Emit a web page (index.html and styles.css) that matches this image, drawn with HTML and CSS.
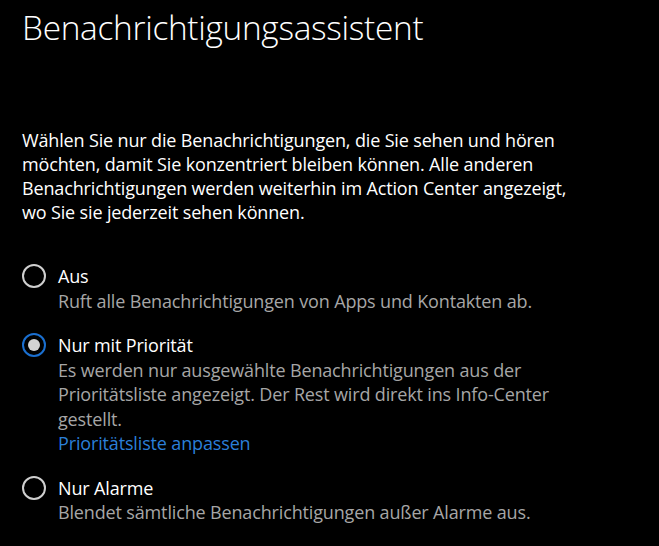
FILE: index.html
```html
<!DOCTYPE html>
<html lang="de">
<head>
<meta charset="utf-8">
<link rel="stylesheet" href="styles.css">
</head>
<body>
<main class="page">
  <h1 class="title">Benachrichtigungsassistent</h1>
  <p class="intro">Wählen Sie nur die Benachrichtigungen, die Sie sehen und hören möchten, damit Sie konzentriert bleiben können. Alle anderen Benachrichtigungen werden weiterhin im Action Center angezeigt, wo Sie sie jederzeit sehen können.</p>
  <div class="options">
    <div class="option">
      <span class="radio"></span>
      <div class="option-body">
        <div class="label">Aus</div>
        <div class="desc">Ruft alle Benachrichtigungen von Apps und Kontakten ab.</div>
      </div>
    </div>
    <div class="option">
      <span class="radio checked"></span>
      <div class="option-body">
        <div class="label">Nur mit Priorität</div>
        <div class="desc">Es werden nur ausgewählte Benachrichtigungen aus der Prioritätsliste angezeigt. Der Rest wird direkt ins Info-Center gestellt.</div>
        <a class="link" href="#">Prioritätsliste anpassen</a>
      </div>
    </div>
    <div class="option">
      <span class="radio"></span>
      <div class="option-body">
        <div class="label">Nur Alarme</div>
        <div class="desc">Blendet sämtliche Benachrichtigungen außer Alarme aus.</div>
      </div>
    </div>
  </div>
</main>
</body>
</html>
```
FILE: styles.css
```css
html, body {
  margin: 0;
  background: #000;
}
body {
  font-family: "Open Sans", "Noto Sans", sans-serif;
  color: #fff;
  width: 659px;
  height: 546px;
  overflow: hidden;
}
.page {
  padding: 0 0 0 22px;
}
.title {
  margin: 0;
  padding-top: 4px;
  font-weight: 300;
  font-size: 33.4px;
  line-height: 46px;
  letter-spacing: -0.3px;
}
.intro {
  margin: 78px 0 0 0;
  width: 568px;
  font-size: 18px;
  line-height: 24px;
  letter-spacing: -0.15px;
}
.options {
  margin-top: 40px;
  display: flex;
  flex-direction: column;
  gap: 20px;
}
.option {
  display: flex;
  gap: 12px;
  align-items: flex-start;
}
.radio {
  flex: none;
  width: 20px;
  height: 20px;
  border: 2.5px solid #cfcfcf;
  border-radius: 50%;
  position: relative;
}
.radio.checked {
  border-color: #1a6fd0;
}
.radio.checked::after {
  content: "";
  position: absolute;
  left: 4px;
  top: 4px;
  width: 12px;
  height: 12px;
  border-radius: 50%;
  background: #d4d4d4;
}
.option-body {
  font-size: 18px;
  line-height: 24.5px;
  letter-spacing: -0.15px;
  width: 510px;
}
.label {
  color: #fff;
}
.desc {
  color: #a6a6a6;
}
.link {
  color: #2b7fd8;
  text-decoration: none;
  display: block;
}
```
